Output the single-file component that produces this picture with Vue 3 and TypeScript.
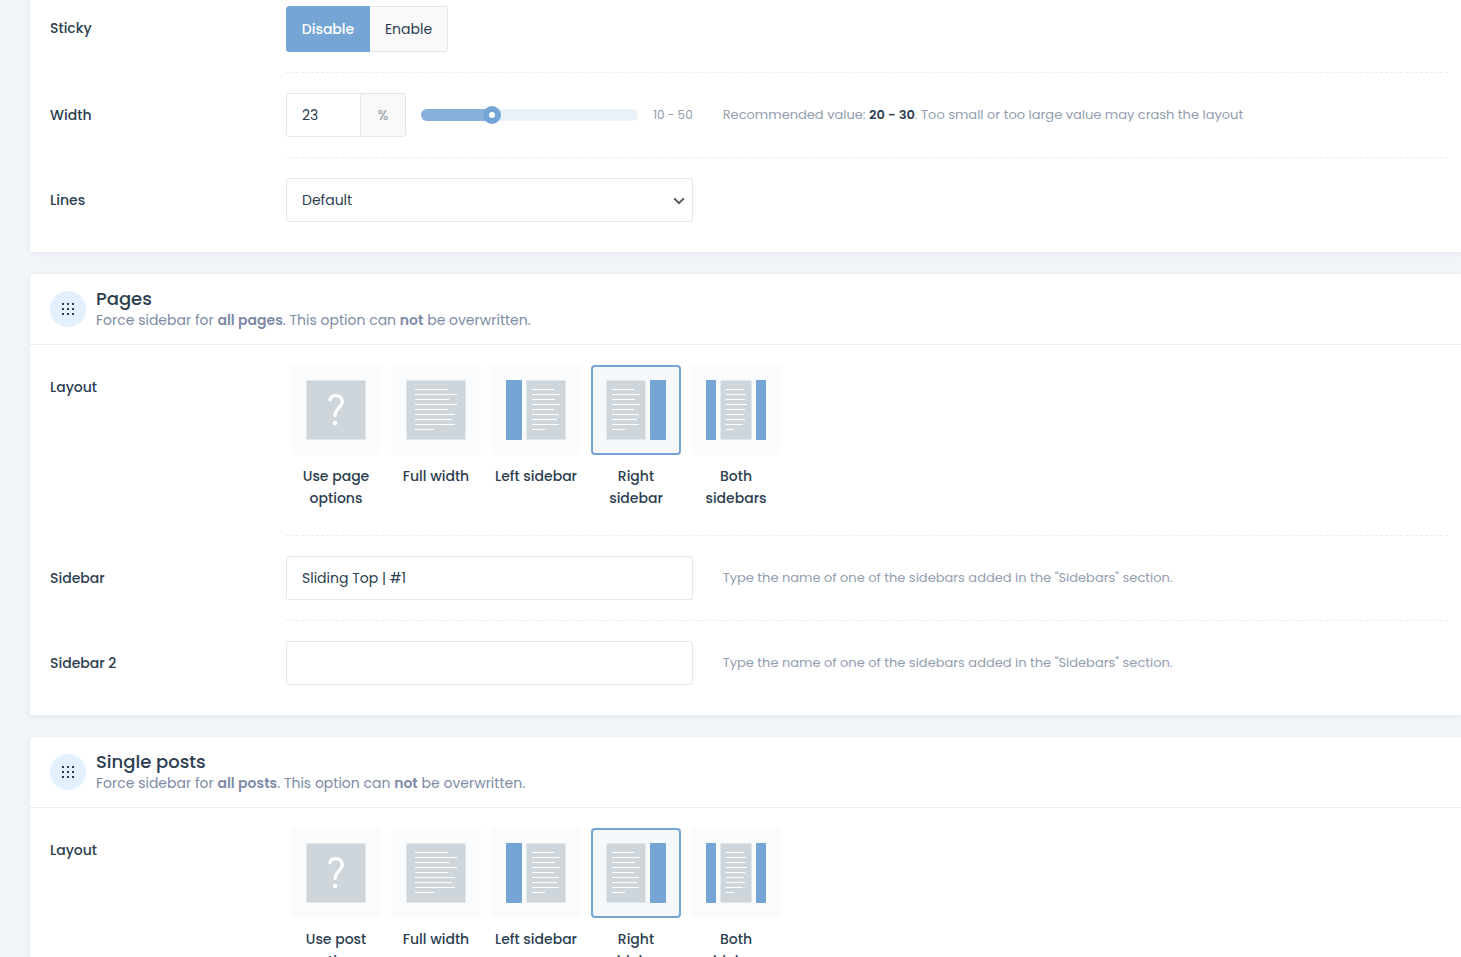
<script setup lang="ts">
import { computed, ref } from 'vue'

type Kind = 'ask' | 'full' | 'left' | 'right' | 'both'

interface Rect {
  x: number
  w: number
}

interface Art {
  doc: Rect
  bars: Rect[]
  lineX: number
  lines: number[]
}

interface Choice {
  kind: Kind
  label: string
}

interface Section {
  id: string
  title: string
  scope: string
  choices: Choice[]
  sidebars: { id: string; label: string }[]
}

const sideLines = [22, 28, 23, 28, 22, 27, 25, 27, 13]

const art: Record<Kind, Art> = {
  ask: { doc: { x: 0, w: 60 }, bars: [], lineX: 0, lines: [] },
  full: { doc: { x: 0, w: 60 }, bars: [], lineX: 9, lines: [33, 42, 34, 42, 33, 40, 37, 40, 19] },
  left: { doc: { x: 20, w: 40 }, bars: [{ x: 0, w: 16 }], lineX: 26, lines: sideLines },
  right: { doc: { x: 0, w: 40 }, bars: [{ x: 44, w: 16 }], lineX: 6, lines: sideLines },
  both: {
    doc: { x: 14, w: 32 },
    bars: [{ x: 0, w: 10 }, { x: 50, w: 10 }],
    lineX: 20,
    lines: [18, 20, 19, 21, 19, 18, 19, 17, 8],
  },
}

const makeChoices = (first: string): Choice[] => [
  { kind: 'ask', label: first },
  { kind: 'full', label: 'Full width' },
  { kind: 'left', label: 'Left sidebar' },
  { kind: 'right', label: 'Right sidebar' },
  { kind: 'both', label: 'Both sidebars' },
]

const sections: Section[] = [
  {
    id: 'pages',
    title: 'Pages',
    scope: 'all pages',
    choices: makeChoices('Use page options'),
    sidebars: [
      { id: 'sidebar', label: 'Sidebar' },
      { id: 'sidebar2', label: 'Sidebar 2' },
    ],
  },
  {
    id: 'posts',
    title: 'Single posts',
    scope: 'all posts',
    choices: makeChoices('Use post options'),
    sidebars: [],
  },
]

const min = 10
const max = 50
const sticky = ref(false)
const width = ref(23)
const lines = ref('default')
const layouts = ref<Record<string, Kind>>({ pages: 'right', posts: 'right' })
const names = ref<Record<string, string>>({ sidebar: 'Sliding Top | #1', sidebar2: '' })

const fill = computed(() => `${((width.value - min) / (max - min)) * 100}%`)
</script>

<template>
  <main class="page">
    <section class="card first">
      <div class="row">
        <span id="sticky-label" class="name">Sticky</span>
        <div class="body">
          <div class="toggle" role="group" aria-labelledby="sticky-label">
            <button type="button" :class="{ on: !sticky }" :aria-pressed="!sticky" @click="sticky = false">Disable</button>
            <button type="button" :class="{ on: sticky }" :aria-pressed="sticky" @click="sticky = true">Enable</button>
          </div>
        </div>
      </div>
      <div class="row">
        <label class="name" for="width">Width</label>
        <div class="body">
          <div class="control ranged">
            <div class="group">
              <input id="width" v-model.number="width" class="field" type="text" />
              <span class="unit">%</span>
            </div>
            <div class="slider">
              <div class="track"><div class="fill" :style="{ width: fill }"></div></div>
              <input v-model.number="width" type="range" :min="min" :max="max" aria-label="Width" />
            </div>
            <span class="limits">{{ min }} - {{ max }}</span>
          </div>
          <p class="hint">Recommended value: <b>20 - 30</b>. Too small or too large value may crash the layout</p>
        </div>
      </div>
      <div class="row">
        <label class="name" for="lines">Lines</label>
        <div class="body">
          <div class="control select">
            <select id="lines" v-model="lines" class="field">
              <option value="default">Default</option>
            </select>
            <svg class="chevron" width="12" height="8" viewBox="0 0 12 8" aria-hidden="true">
              <path d="M1.2 1.4 6 6.2l4.8-4.8" fill="none" stroke="#50575e" stroke-width="2" />
            </svg>
          </div>
        </div>
      </div>
    </section>

    <section v-for="s in sections" :key="s.id" class="card">
      <header class="head">
        <span class="badge">
          <svg width="14" height="14" viewBox="0 0 14 14" fill="#2c3e50" aria-hidden="true">
            <template v-for="y in [1, 6, 11]" :key="y">
              <rect v-for="x in [1, 6, 11]" :key="x" :x="x" :y="y" width="2" height="2" />
            </template>
          </svg>
        </span>
        <div>
          <h2>{{ s.title }}</h2>
          <p>Force sidebar for <b>{{ s.scope }}</b>. This option can <b>not</b> be overwritten.</p>
        </div>
      </header>
      <div class="row">
        <span :id="`${s.id}-layout`" class="name">Layout</span>
        <div class="body">
          <div class="choices" role="radiogroup" :aria-labelledby="`${s.id}-layout`">
            <label v-for="c in s.choices" :key="c.kind" class="choice">
              <input v-model="layouts[s.id]" type="radio" :name="`${s.id}-layout`" :value="c.kind" />
              <span class="tile">
                <svg width="60" height="60" viewBox="0 0 60 60" aria-hidden="true">
                  <rect :x="art[c.kind].doc.x + 0.5" y="0.5" :width="art[c.kind].doc.w - 1" height="59" rx="0.5" fill="#ced5db" stroke="#e1e7ea" />
                  <rect v-for="b in art[c.kind].bars" :key="b.x" :x="b.x" y="0" :width="b.w" height="60" rx="1" fill="#74a5d5" />
                  <rect v-for="(w, i) in art[c.kind].lines" :key="i" :x="art[c.kind].lineX" :y="9 + i * 5" :width="w" height="1" fill="#fff" />
                  <g v-if="c.kind === 'ask'">
                    <path d="M23.9 19.8C24.6 17.2 27 15.6 30 15.6C33.6 15.6 36.2 18.3 36.2 21.7C36.2 27.5 29 28.3 29 35.5" fill="none" stroke="#fff" stroke-width="3.2" stroke-linecap="round" />
                    <circle cx="29" cy="43" r="2.3" fill="#fff" />
                  </g>
                </svg>
              </span>
              <span class="caption">{{ c.label }}</span>
            </label>
          </div>
        </div>
      </div>
      <div v-for="f in s.sidebars" :key="f.id" class="row">
        <label class="name" :for="f.id">{{ f.label }}</label>
        <div class="body">
          <div class="control">
            <input :id="f.id" v-model="names[f.id]" class="field" type="text" />
          </div>
          <p class="hint">Type the name of one of the sidebars added in the "Sidebars" section.</p>
        </div>
      </div>
    </section>
  </main>
</template>

<style>
body {
  margin: 0;
  background: #f1f5f8;
}
</style>

<style scoped>
* {
  box-sizing: border-box;
}

.page {
  height: 100vh;
  overflow: hidden;
  padding-left: 30px;
  background: #f1f5f8;
  color: #2c3e50;
  font: 14px/22px Poppins, Inter, sans-serif;
}

.card {
  margin-bottom: 22px;
  padding-bottom: 10px;
  background: #fff;
  border-radius: 3px 0 0 3px;
  box-shadow: 0 0 0 1px #ebeef3, 0 2px 5px rgba(30, 50, 90, 0.05);
}

.first {
  border-top-left-radius: 0;
}

.head {
  display: flex;
  align-items: center;
  gap: 10px;
  height: 71px;
  padding: 0 20px;
  border-bottom: 1px solid #ebedf2;
}

.badge {
  display: flex;
  align-items: center;
  justify-content: center;
  width: 36px;
  height: 36px;
  border-radius: 50%;
  background: #e3f1ff;
}

h2 {
  margin: 0;
  font-size: 18px;
  font-weight: 500;
  line-height: 22px;
}

.head p {
  margin: 0;
  color: #7d8ba6;
  line-height: 20px;
}

.head b {
  font-weight: 600;
}

.row {
  display: flex;
  padding: 0 13px 0 20px;
}

.name {
  flex: 0 0 236px;
  padding-top: 20px;
  font-weight: 500;
  line-height: 44px;
}

.body {
  display: flex;
  flex: 1;
  gap: 30px;
  min-width: 0;
  padding: 20px 0;
  border-bottom: 1px dashed #ebedf2;
}

.row:last-child .body {
  border-bottom: 0;
}

.first .row:first-child .name,
.first .row:first-child .body {
  padding-top: 6px;
}

.control {
  flex: 0 0 35%;
  min-width: 0;
}

.hint {
  flex: 1;
  margin: 0;
  color: #929daf;
  font-size: 13px;
  line-height: 44px;
}

.hint b {
  color: #2c3e50;
  font-weight: 600;
}

.field {
  display: block;
  width: 100%;
  height: 44px;
  margin: 0;
  padding: 0 15px;
  border: 1px solid #e1e7ec;
  border-radius: 3px;
  outline: 0;
  background: #fff;
  color: #2c3e50;
  font: inherit;
}

.toggle {
  display: flex;
}

.toggle button {
  min-width: 78px;
  height: 46px;
  padding: 0 14px;
  border: 1px solid #e1e7ec;
  border-left: 0;
  border-radius: 0 3px 3px 0;
  background: #f9f9f9;
  color: #2c3e50;
  font: inherit;
}

.toggle button:first-child {
  min-width: 84px;
  border-left: 1px solid #e1e7ec;
  border-radius: 3px 0 0 3px;
}

.toggle button.on {
  border-color: #74a5d5;
  background: #74a5d5;
  color: #fff;
  font-weight: 500;
}

.ranged {
  display: flex;
  align-items: center;
  gap: 15px;
}

.group {
  display: flex;
  width: 120px;
}

.group .field {
  flex: 1;
  min-width: 0;
  border-radius: 3px 0 0 3px;
}

.unit {
  width: 45px;
  height: 44px;
  border: 1px solid #e1e7ec;
  border-left: 0;
  border-radius: 0 3px 3px 0;
  background: #f9f9f9;
  color: #8a94a0;
  line-height: 42px;
  text-align: center;
}

.slider {
  display: grid;
  flex: 1;
  align-items: center;
  min-width: 0;
}

.track,
.slider input {
  grid-area: 1 / 1;
}

.track {
  height: 12px;
  overflow: hidden;
  border-radius: 6px;
  background: #e9f1f9;
}

.fill {
  height: 100%;
  background: #87b1db;
}

.slider input {
  height: 18px;
  min-width: 0;
  margin: 0 -10px 0 -9px;
  background: transparent;
  appearance: none;
}

.slider input::-webkit-slider-thumb {
  box-sizing: border-box;
  width: 18px;
  height: 18px;
  border: 6px solid #74a5d5;
  border-radius: 50%;
  background: #fff;
  appearance: none;
}

.limits {
  width: 40px;
  color: #929daf;
  font-size: 12px;
  text-align: right;
  white-space: nowrap;
}

.select {
  position: relative;
}

.select .field {
  appearance: none;
}

.chevron {
  position: absolute;
  top: 19px;
  right: 8px;
  pointer-events: none;
}

.choices {
  display: flex;
  gap: 10px;
  padding: 0 5px 6px;
}

.choice {
  position: relative;
  width: 90px;
  text-align: center;
}

.choice input {
  position: absolute;
  top: 0;
  left: 0;
  width: 90px;
  height: 90px;
  margin: 0;
  opacity: 0;
}

.tile {
  display: flex;
  align-items: center;
  justify-content: center;
  height: 90px;
  margin-bottom: 10px;
  border: 2px solid #fafbfd;
  border-radius: 4px;
  background: #fafbfd;
}

.choice input:checked + .tile {
  border-color: #74a5d5;
  background: #f5f9fc;
}

.caption {
  display: block;
  font-weight: 500;
}
</style>
